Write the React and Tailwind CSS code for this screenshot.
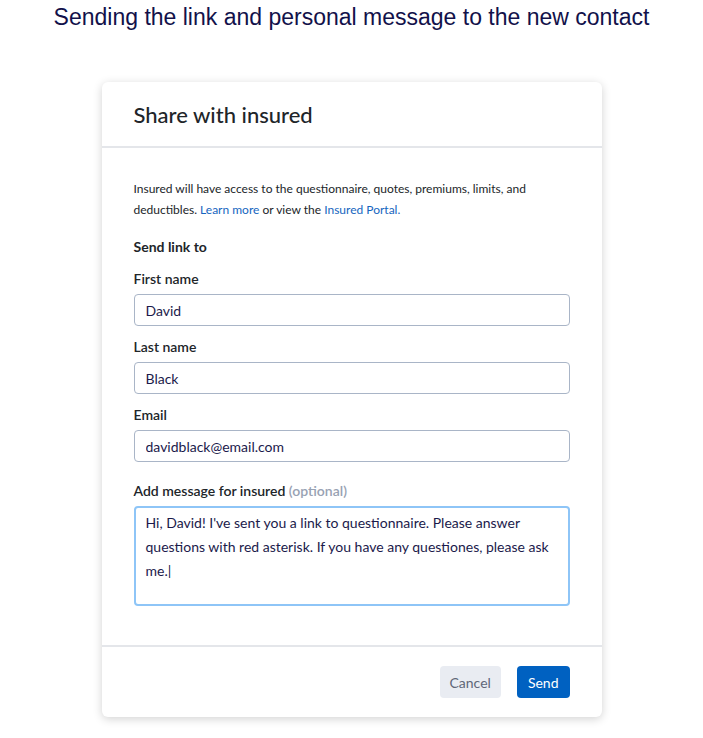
export default function App() {
  const labelCls = "block text-[14px] leading-5 font-semibold text-[#212529] mb-[5px]";
  const inputCls =
    "block h-8 w-full rounded-[4px] border border-[#a9b5c7] bg-white px-[11px] text-[14px] text-[#1b1a4b] outline-none";

  return (
    <div className="min-h-screen w-full bg-white font-['Lato',sans-serif]">
      <h1 className="pt-[3px] text-center font-['Liberation_Sans',Arial,sans-serif] text-[23px] leading-[28px] text-[#12114a]">
        Sending the link and personal message to the new contact
      </h1>

      <div className="mx-auto mt-[51px] w-[500px] rounded-[6px] bg-white shadow-[0_2px_10px_rgba(0,0,0,0.18)]">
        {/* header */}
        <div className="flex h-[66px] items-center border-b-2 border-[#e4e6ea] px-8">
          <h2 className="text-[22px] font-medium text-[#212529]">Share with insured</h2>
        </div>

        {/* body */}
        <div className="px-8 pt-[30px] pb-[39px]">
          <p className="text-[12px] leading-[21px] text-[#212529]">
            Insured will have access to the questionnaire, quotes, premiums, limits, and
            deductibles. <a href="#learn" className="text-[#1565c0]">Learn more</a> or view the{" "}
            <a href="#portal" className="text-[#1565c0]">Insured Portal.</a>
          </p>

          <p className="mt-[17px] text-[14px] leading-5 font-bold text-[#212529]">Send link to</p>

          <div className="mt-[12px]">
            <label className={labelCls}>First name</label>
            <input className={inputCls} defaultValue="David" />
          </div>

          <div className="mt-[11px]">
            <label className={labelCls}>Last name</label>
            <input className={inputCls} defaultValue="Black" />
          </div>

          <div className="mt-[11px]">
            <label className={labelCls}>Email</label>
            <input className={inputCls} defaultValue="davidblack@email.com" />
          </div>

          <div className="mt-[19px]">
            <label className={labelCls}>
              Add message for insured{" "}
              <span className="font-semibold text-[#98a2b3]">(optional)</span>
            </label>
            <textarea
              className="block h-[100px] w-full resize-none rounded-[4px] border-2 border-[#8ec5f7] bg-white px-[10px] py-[3px] text-[14px] leading-[24px] text-[#1b1a4b] outline-none"
              defaultValue="Hi, David! I've sent you a link to questionnaire. Please answer questions with red asterisk. If you have any questiones, please ask me.|"
            />
          </div>
        </div>

        {/* footer */}
        <div className="flex justify-end gap-4 border-t-2 border-[#e4e6ea] px-8 pt-[19px] pb-[19px]">
          <button className="h-8 rounded-[4px] bg-[#e9ecf2] px-[10px] text-[14px] text-[#5f6778]">
            Cancel
          </button>
          <button className="h-8 rounded-[4px] bg-[#0061c1] px-[11px] text-[14px] text-white">
            Send
          </button>
        </div>
      </div>
    </div>
  );
}
